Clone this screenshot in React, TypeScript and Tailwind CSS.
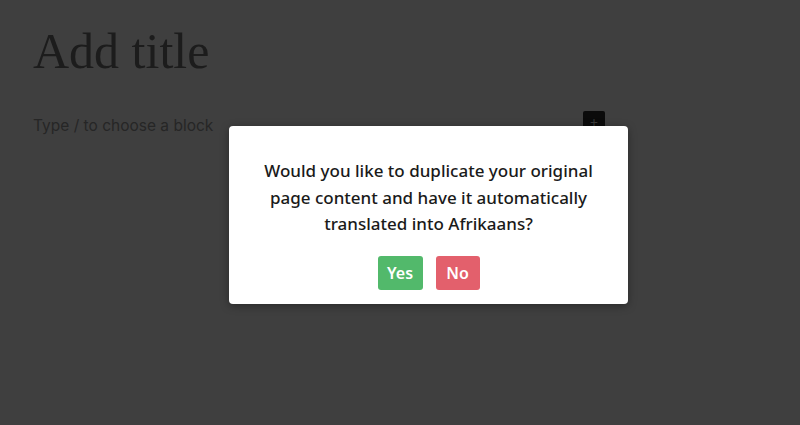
export default function App() {
  return (
    <div className="relative h-[425px] w-[800px] overflow-hidden bg-[#3f3f3f]">
      {/* editor behind the overlay */}
      <div className="px-[33px] pt-[22px]">
        <h1 className="text-[50px] leading-[58px] text-[#1c1c1c] [font-family:'Liberation_Serif',serif]">
          Add title
        </h1>
        <div className="mt-[34px] flex items-center justify-between pr-[162px]">
          <p className="text-[15.5px] text-[#262626] [font-family:'Inter',sans-serif]">
            Type / to choose a block
          </p>
          <div className="mt-[-6px] flex h-[24px] w-[22px] items-center justify-center rounded-[2px] bg-[#0b0b0b] text-[14px] leading-none text-[#3a3a3a]">
            +
          </div>
        </div>
      </div>

      {/* modal */}
      <div className="absolute left-[229px] top-[126px] w-[399px] rounded-[4px] bg-white px-[24px] pb-[14px] pt-[32px] text-center shadow-[0_2px_8px_rgba(0,0,0,0.35)]">
        <p className="text-[17px] font-medium leading-[26.5px] text-[#1a1a1a] [font-family:'Noto_Sans',sans-serif]">
          Would you like to duplicate your original page content and have it automatically translated into Afrikaans?
        </p>
        <div className="mt-[18px] flex justify-center gap-[13px] [font-family:'Noto_Sans',sans-serif]">
          <button className="h-[34px] w-[45px] rounded-[3px] bg-[#52b96b] text-[16px] font-semibold text-white">
            Yes
          </button>
          <button className="h-[34px] w-[44px] rounded-[3px] bg-[#e3606c] text-[16px] font-semibold text-white">
            No
          </button>
        </div>
      </div>
    </div>
  )
}
